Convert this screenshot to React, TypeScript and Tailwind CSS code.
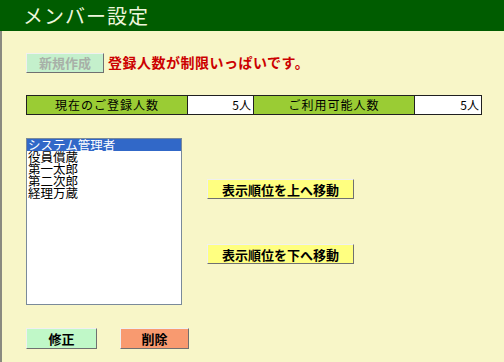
const members = ['システム管理者', '役員償蔵', '第一太郎', '第二次郎', '経理万蔵']

const font = { fontFamily: '"MS PGothic", "Noto Sans CJK JP", sans-serif' }

function RaisedButton({
  label,
  className,
}: {
  label: string
  className: string
}) {
  return (
    <button
      type="button"
      className={`flex items-center justify-center border border-t-[#f0f0f0] border-l-[#f0f0f0] border-r-[#707070] border-b-[#707070] text-[13px] leading-none ${className}`}
    >
      {label}
    </button>
  )
}

export default function App() {
  return (
    <div
      className="flex h-[362px] w-[504px] flex-col overflow-hidden bg-[#f8f6c8]"
      style={font}
    >
      <div className="flex h-[31px] shrink-0 items-center bg-[#005c00] pl-[23px] text-[20px] tracking-[1px] text-[#eef6dc]">
        メンバー設定
      </div>

      <div className="flex flex-1 flex-col border-l-2 border-[#8a8a80] pl-[24px]">
        <div className="mt-[21px] flex items-center">
          <RaisedButton
            label="新規作成"
            className="h-[20px] w-[78px] bg-[#c4f0cc] font-bold text-[#a8b0a8]"
          />
          <span className="ml-[4px] text-[14px] font-bold tracking-[0.5px] text-[#cc0000]">
            登録人数が制限いっぱいです。
          </span>
        </div>

        <div className="mt-[22px] flex h-[20px] w-[456px] border border-[#202020] text-[12px]">
          <div className="flex w-[161px] items-center justify-center border-r border-[#202020] bg-[#9acc34] tracking-[1px]">
            現在のご登録人数
          </div>
          <div className="flex w-[66px] items-center justify-end border-r border-[#202020] bg-white pr-[2px]">
            5人
          </div>
          <div className="flex w-[161px] items-center justify-center border-r border-[#202020] bg-[#9acc34] tracking-[1px]">
            ご利用可能人数
          </div>
          <div className="flex flex-1 items-center justify-end bg-white pr-[2px]">
            5人
          </div>
        </div>

        <div className="mt-[23px] flex">
          <ul className="h-[167px] w-[156px] border border-[#7a8a9a] bg-white text-[12.5px] text-black">
            {members.map((m, i) => (
              <li
                key={m}
                className={
                  i === 0
                    ? 'flex h-[12px] items-center bg-[#3168c8] pl-[1px] leading-none text-white'
                    : 'flex h-[12px] items-center pl-[1px] leading-none'
                }
              >
                {m}
              </li>
            ))}
          </ul>

          <div className="ml-[25px] flex flex-col">
            <RaisedButton
              label="表示順位を上へ移動"
              className="mt-[41px] h-[20px] w-[147px] bg-[#ffff80] font-bold text-black"
            />
            <RaisedButton
              label="表示順位を下へ移動"
              className="mt-[45px] h-[20px] w-[147px] bg-[#ffff80] font-bold text-black"
            />
          </div>
        </div>

        <div className="mt-[23px] flex gap-[23px]">
          <RaisedButton
            label="修正"
            className="h-[21px] w-[71px] bg-[#c0f8c8] font-bold text-black"
          />
          <RaisedButton
            label="削除"
            className="h-[21px] w-[69px] bg-[#f89a70] font-bold text-black"
          />
        </div>
      </div>
    </div>
  )
}
